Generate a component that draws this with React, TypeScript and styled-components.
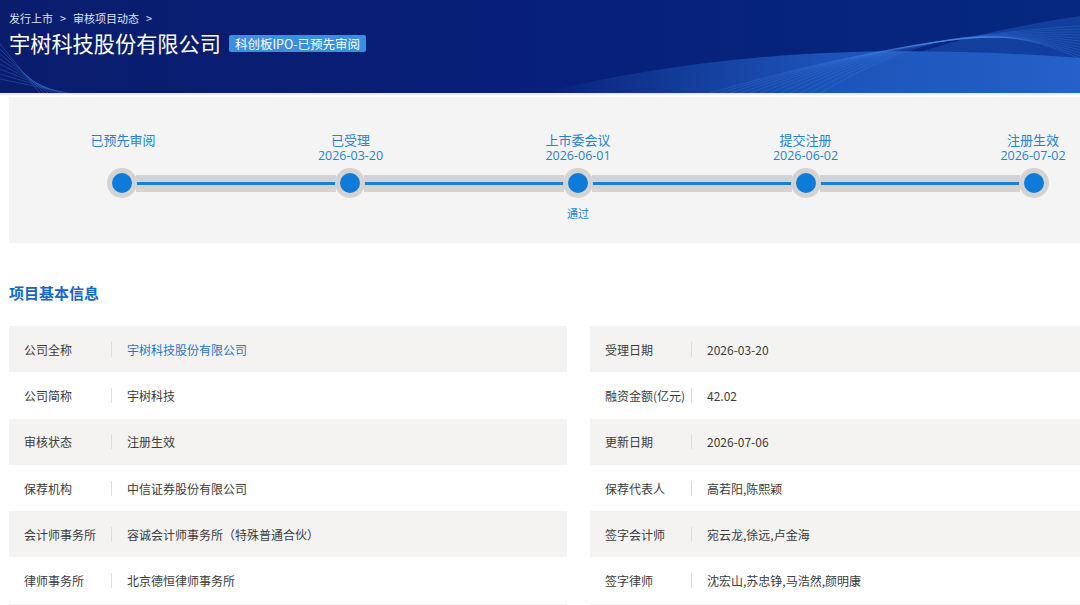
import React from "react";
import styled, { createGlobalStyle } from "styled-components";

const GlobalStyle = createGlobalStyle`
  html, body {
    margin: 0;
    padding: 0;
    background: #ffffff;
    font-family: "Noto Sans CJK SC", "Noto Sans", "Open Sans", sans-serif;
  }
`;

const Page = styled.div`
  width: 1080px;
  height: 605px;
  overflow: hidden;
  background: #fff;
`;

const Banner = styled.header`
  position: relative;
  height: 93px;
  overflow: hidden;
  background: linear-gradient(90deg, #0a1c6c 0%, #071f78 45%, #06287f 100%);
  border-bottom: 2px solid #e8eef8;
`;

const Waves = styled.svg`
  position: absolute;
  inset: 0;
  width: 100%;
  height: 100%;
`;

const BannerInner = styled.div`
  position: relative;
  padding: 11px 0 0 9px;
  color: #fff;
`;

const Crumbs = styled.div`
  display: flex;
  align-items: center;
  gap: 7px;
  font-size: 11px;
  line-height: 15px;
  color: #dfe5f2;
`;

const TitleRow = styled.div`
  display: flex;
  align-items: center;
  gap: 8px;
  margin-top: 2px;
`;

const Title = styled.h1`
  margin: 0;
  font-size: 21.2px;
  line-height: 30px;
  font-weight: 400;
  color: #fff;
`;

const Badge = styled.span`
  display: inline-block;
  background: #3a8fe0;
  color: #fff;
  font-size: 12.5px;
  line-height: 17px;
  padding: 0 6px;
  border-radius: 2px;
  margin-top: 1px;
`;

const Body = styled.main`
  padding: 2px 0 0 9px;
`;

const Progress = styled.section`
  background: #f4f4f4;
  height: 146px;
  box-sizing: border-box;
  padding: 35px 32px 0 99px;
`;

const StepRow = styled.div`
  display: flex;
  justify-content: space-between;
  width: 940px;
`;

const StepCell = styled.div`
  width: 30px;
  display: flex;
  flex-direction: column;
  align-items: center;
  white-space: nowrap;
  color: #2581d6;
`;

const StepName = styled.div`
  font-size: 13px;
  line-height: 16px;
`;

const StepDate = styled.div`
  font-size: 12.5px;
  line-height: 15px;
  font-family: "Open Sans", "Noto Sans CJK SC", sans-serif;
`;

const StepNote = styled.div`
  font-size: 11px;
  line-height: 14px;
`;

const Track = styled.div`
  display: flex;
  align-items: center;
  width: 940px;
  height: 30px;
  margin: 5px 0 8px;
`;

const Dot = styled.div`
  width: 30px;
  height: 30px;
  flex: none;
  box-sizing: border-box;
  border-radius: 50%;
  background: #0e7bd9;
  border: 5px solid #d3d3d3;
  margin: 0 -1px;
  position: relative;
  z-index: 1;
`;

const Segment = styled.div`
  flex: none;
  flex-grow: 1;
  height: 17px;
  background: #d3d3d3;
  display: flex;
  align-items: center;

  &::after {
    content: "";
    display: block;
    width: 100%;
    height: 3px;
    background: #1a7fd8;
  }
`;

const SectionTitle = styled.h2`
  margin: 41px 0 0;
  font-size: 15px;
  line-height: 18px;
  font-weight: 700;
  color: #1566c6;
`;

const InfoGrid = styled.div`
  display: grid;
  grid-template-columns: 558px 1fr;
  column-gap: 23px;
  margin-top: 24px;
`;

const Cell = styled.div<{ $shaded: boolean }>`
  display: flex;
  align-items: center;
  height: 46.3px;
  background: ${({ $shaded }) => ($shaded ? "#f4f3f2" : "#fff")};
  font-size: 12px;
  color: #3a3a3a;
`;

const Label = styled.div<{ $w: number }>`
  width: ${({ $w }) => $w}px;
  padding-left: 15px;
  flex: none;
  box-sizing: border-box;
`;

const Divider = styled.span`
  width: 1px;
  height: 15px;
  background: #dddddd;
  margin-right: 15px;
`;

const Value = styled.div<{ $link?: boolean }>`
  color: ${({ $link }) => ($link ? "#2673c8" : "#3a3a3a")};
`;

const steps = [
  { name: "已预先审阅", date: "" },
  { name: "已受理", date: "2026-03-20" },
  { name: "上市委会议", date: "2026-06-01", note: "通过" },
  { name: "提交注册", date: "2026-06-02" },
  { name: "注册生效", date: "2026-07-02" },
];

const rows: [string, string, boolean?][][] = [
  [["公司全称", "宇树科技股份有限公司", true], ["受理日期", "2026-03-20"]],
  [["公司简称", "宇树科技"], ["融资金额(亿元)", "42.02"]],
  [["审核状态", "注册生效"], ["更新日期", "2026-07-06"]],
  [["保荐机构", "中信证券股份有限公司"], ["保荐代表人", "高若阳,陈熙颖"]],
  [["会计师事务所", "容诚会计师事务所（特殊普通合伙）"], ["签字会计师", "宛云龙,徐远,卢金海"]],
  [["律师事务所", "北京德恒律师事务所"], ["签字律师", "沈宏山,苏忠铮,马浩然,颜明康"]],
];

const BannerWaves = () => (
  <Waves viewBox="0 0 1080 93" preserveAspectRatio="none">
    <defs>
      <linearGradient id="band" x1="0" y1="0" x2="1" y2="0">
        <stop offset="0" stopColor="#2b6fd6" stopOpacity="0" />
        <stop offset="0.5" stopColor="#2563cc" stopOpacity="0.7" />
        <stop offset="1" stopColor="#2f74dc" stopOpacity="0.9" />
      </linearGradient>
    </defs>
    <path d="M540 93 C700 55 860 42 1080 58 L1080 93 Z" fill="url(#band)" />
    <path d="M820 93 C880 62 960 34 1080 16 L1080 93 Z" fill="#1d55bd" opacity="0.5" />
    {Array.from({ length: 12 }).map((_, i) => (
      <path
        key={i}
        d={`M${710 + i * 10} 93 C${830 + i * 8} ${58 - i * 2} ${950 + i * 4} ${34 - i * 1.5} 1080 ${26 + i * 3}`}
        stroke="#4d8ff0"
        strokeOpacity="0.3"
        strokeWidth="0.8"
        fill="none"
      />
    ))}
    {Array.from({ length: 8 }).map((_, i) => (
      <path
        key={`l${i}`}
        d={`M0 ${44 + i * 5} L${40 + i * 4} 93`}
        stroke="#3f7fe0"
        strokeOpacity="0.35"
        strokeWidth="1"
        fill="none"
      />
    ))}
  </Waves>
);

export default function App() {
  return (
    <Page>
      <GlobalStyle />
      <Banner>
        <BannerWaves />
        <BannerInner>
          <Crumbs>
            <span>发行上市</span>
            <span>&gt;</span>
            <span>审核项目动态</span>
            <span>&gt;</span>
          </Crumbs>
          <TitleRow>
            <Title>宇树科技股份有限公司</Title>
            <Badge>科创板IPO-已预先审阅</Badge>
          </TitleRow>
        </BannerInner>
      </Banner>
      <Body>
        <Progress>
          <StepRow>
            {steps.map((s) => (
              <StepCell key={s.name} style={{ height: 31 }}>
                <StepName>{s.name}</StepName>
                {s.date && <StepDate>{s.date}</StepDate>}
              </StepCell>
            ))}
          </StepRow>
          <Track>
            {steps.map((s, i) => (
              <React.Fragment key={s.name}>
                {i > 0 && <Segment />}
                <Dot />
              </React.Fragment>
            ))}
          </Track>
          <StepRow>
            {steps.map((s) => (
              <StepCell key={s.name}>
                <StepNote>{s.note ?? ""}</StepNote>
              </StepCell>
            ))}
          </StepRow>
        </Progress>
        <SectionTitle>项目基本信息</SectionTitle>
        <InfoGrid>
          {rows.map((pair, r) =>
            pair.map(([label, value, link], c) => (
              <Cell key={`${r}-${c}`} $shaded={r % 2 === 0}>
                <Label $w={c === 0 ? 102 : 101}>{label}</Label>
                <Divider />
                <Value $link={link}>{value}</Value>
              </Cell>
            ))
          )}
          <Cell $shaded />
          <Cell $shaded />
        </InfoGrid>
      </Body>
    </Page>
  );
}
